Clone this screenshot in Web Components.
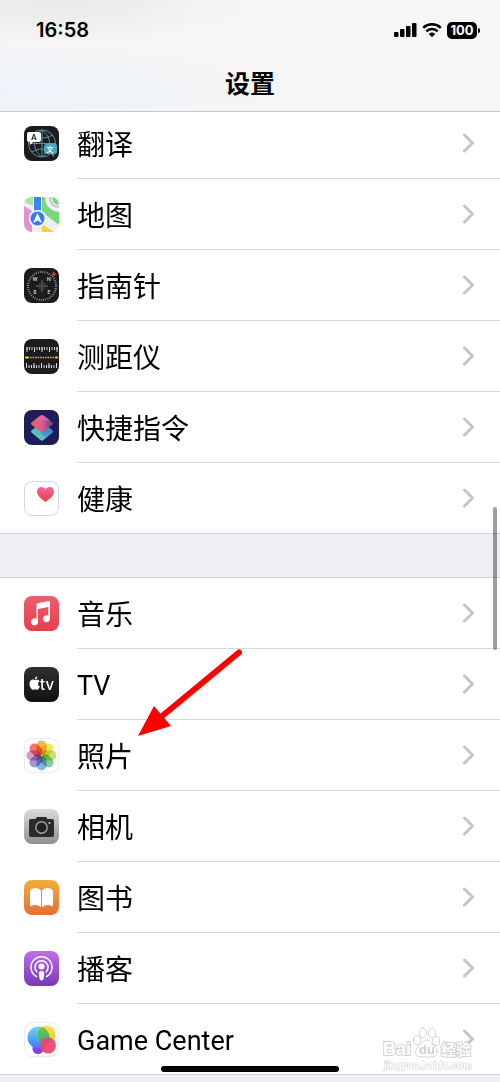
<!DOCTYPE html>
<html lang="zh-CN">
<head>
<meta charset="utf-8">
<meta name="viewport" content="width=device-width, initial-scale=1">
<title>设置</title>
<style>
    html {
        background: #f0eff5;
    }

    body {
        margin: 0;
        color: #000;
        font-family: Inter, "Noto Sans CJK SC", sans-serif;
    }
</style>
</head>
<body>

<settings-screen>
    <status-bar slot="header" time="16:58" battery="100"></status-bar>
    <nav-title slot="header">设置</nav-title>

    <settings-group class="scrolled">
        <settings-row icon="translate">翻译</settings-row>
        <settings-row icon="maps">地图</settings-row>
        <settings-row icon="compass">指南针</settings-row>
        <settings-row icon="measure">测距仪</settings-row>
        <settings-row icon="shortcuts">快捷指令</settings-row>
        <settings-row icon="health">健康</settings-row>
    </settings-group>

    <settings-group>
        <settings-row icon="music">音乐</settings-row>
        <settings-row icon="tv" lang="en">TV</settings-row>
        <settings-row icon="photos">照片</settings-row>
        <settings-row icon="camera">相机</settings-row>
        <settings-row icon="books">图书</settings-row>
        <settings-row icon="podcasts">播客</settings-row>
        <settings-row icon="games" lang="en">Game Center</settings-row>
    </settings-group>

    <pointer-arrow slot="overlay"></pointer-arrow>
    <site-watermark slot="overlay"></site-watermark>
</settings-screen>

<script>
const ICONS = {
    translate: `
        <rect width="35" height="35" rx="8" fill="#1c1c1e"/>
        <g fill="none" stroke="#5c93a3" stroke-width="1">
            <circle cx="18" cy="17.500" r="13.500"/>
            <path d="M4.500 17.500h27M18 4v27M18 4c-10 7-10 20 0 27M18 4c10 7 10 20 0 27M8 9c6 4 14 4 20 0M8 26c6-4 14-4 20 0"/>
        </g>
        <path d="M5 6h10a2 2 0 0 1 2 2v6a2 2 0 0 1-2 2H9l-3 3v-3H5a2 2 0 0 1-2-2V8a2 2 0 0 1 2-2z" fill="#fff"/>
        <path d="M22 18h9a2 2 0 0 1 2 2v6a2 2 0 0 1-2 2h-1v3l-3-3h-5a2 2 0 0 1-2-2v-6a2 2 0 0 1 2-2z" fill="#4ba3bc"/>
        <text x="10" y="14" font-size="8" font-weight="600" text-anchor="middle" fill="#222">A</text>
        <text x="26" y="26" font-size="7" font-weight="700" text-anchor="middle" fill="#fff">文</text>`,
    maps: `
        <clipPath id="m"><rect width="35" height="35" rx="8"/></clipPath>
        <g clip-path="url(#m)">
            <rect width="35" height="35" fill="#efeff2"/>
            <path d="M0 0h9v9L0 5z" fill="#a4e59b"/>
            <path d="M0 9l8 5v21H0z" fill="#df91d4"/>
            <path d="M18 0h17v28L18 15z" fill="#78d979"/>
            <path d="M18 27l12 8H18z" fill="#f8cd46"/>
            <path d="M25 -1a10 10 0 0 0 12 12" fill="none" stroke="#f1f1f3" stroke-width="7"/>
            <path d="M26 0a9 9 0 0 0 10 10" fill="none" stroke="#c9c9cd" stroke-width="2"/>
            <path d="M31-1l5 5V-1z" fill="#d7d7da"/>
            <path d="M10 0h7v20h-7z" fill="#3e83f0"/>
            <circle cx="13.500" cy="21.500" r="8.800" fill="#f4f5fa"/>
            <circle cx="13.500" cy="21.500" r="7" fill="#347af0"/>
            <path d="M13.500 16l4.500 10-4.500-2.500L9 26z" fill="#fff"/>
        </g>`,
    compass: `
        <rect width="35" height="35" rx="8" fill="#1c1c1e"/>
        <circle cx="18" cy="18" r="14" fill="none" stroke="#aaa" stroke-width="2" stroke-dasharray="0.800 1.400"/>
        <path d="M18 12v12M12 18h12" stroke="#555" stroke-width="1.500"/>
        <circle cx="18" cy="18" r="4" fill="#444" opacity=".6"/>
        <path d="M29 3.500l3 2.500-2 2-2-1z" fill="#f23b30"/>
        <g font-size="5" font-weight="700" text-anchor="middle" fill="#ccc">
            <text x="11" y="13">W</text><text x="25" y="13">N</text>
            <text x="11" y="26">S</text><text x="25" y="26">E</text>
        </g>`,
    measure: `
        <rect width="35" height="35" rx="8" fill="#1c1c1e"/>
        <g fill="none" stroke="#d8d8d8">
            <path d="M2.500 9.500h31" stroke-width="3" stroke-dasharray="1 1.500"/>
            <path d="M2.500 10.500h31" stroke-width="5" stroke-dasharray="1 6.500"/>
            <path d="M2 27.500h32" stroke-width="3" stroke-dasharray="1 1.500"/>
            <path d="M2 26.500h32" stroke-width="5" stroke-dasharray="1 6.500"/>
            <path d="M1 18.500h33" stroke="#e9b634" stroke-width="1.500" stroke-dasharray="1.500 1"/>
        </g>
        <path d="M2 17.500h2v2H2zM31.500 17.500h2v2h-2z" fill="#ffd23f"/>`,
    shortcuts: `
        <defs>
            <linearGradient id="s1" x1="0" y1="0" x2="1" y2="1"><stop stop-color="#377889"/><stop offset="1" stop-color="#4381f2"/></linearGradient>
            <linearGradient id="s2" x1="1" y1="0" x2="0" y2="1"><stop stop-color="#357ef1"/><stop offset="1" stop-color="#6ce3a4"/></linearGradient>
            <linearGradient id="s3" x1="0" y1="0" x2="1" y2="0"><stop stop-color="#f06452"/><stop offset=".5" stop-color="#dc5b91"/><stop offset="1" stop-color="#62417e"/></linearGradient>
        </defs>
        <rect width="35" height="35" rx="8" fill="#1d1d59"/>
        <path d="M16.500 13.500q1.500-1 3 0L28 20q2 1.500 0 3l-8.500 7q-1.500 1-3 0L8 23q-2-1.500 0-3z" fill="url(#s2)"/>
        <path d="M18 13.500l10 6.500q2 1.500 0 3l-6 4.500L12 17z" fill="url(#s1)" opacity=".55"/>
        <path d="M16.500 5.500q1.500-1 3 0L28 12q2 1.500 0 3l-8.500 6.500q-1.500 1-3 0L8 15q-2-1.500 0-3z" fill="url(#s3)"/>
        <path d="M10 10.500l6.500-5q1.500-1 3 0l6 4.500z" fill="#e76bb2" opacity=".6"/>`,
    health: `
        <linearGradient id="h" x1="0" y1="0" x2="0" y2="1"><stop stop-color="#ed67ad"/><stop offset="1" stop-color="#f03c2e"/></linearGradient>
        <rect x=".5" y=".5" width="34" height="34" rx="7.500" fill="#fff" stroke="#d6d6d8"/>
        <path d="M21.500 21C17 17.500 13 14.500 13 10.500 13 7.500 15 6 17.200 6c2 0 3.500 1 4.300 2.500C22.300 7 23.800 6 25.800 6 28 6 30 7.500 30 10.500c0 4-4 7-8.500 10.500z" fill="url(#h)"/>`,
    music: `
        <linearGradient id="a" x1="0" y1="0" x2="0" y2="1"><stop stop-color="#ea6070"/><stop offset="1" stop-color="#e73e49"/></linearGradient>
        <rect width="35" height="35" rx="8" fill="url(#a)"/>
        <path d="M12.500 8.500q0-1 1-1.200L25 5q1-.2 1 .8v17a3.500 3.500 0 1 1-1.700-3V11L14 13v12.500a3.500 3.500 0 1 1-1.500-2.500z" fill="#fff"/>`,
    tv: `
        <linearGradient id="t" x1="0" y1="0" x2="0" y2="1"><stop stop-color="#303030"/><stop offset="1" stop-color="#111"/></linearGradient>
        <rect width="35" height="35" rx="8" fill="url(#t)"/>
        <path d="M11 13.200c-1.200-.6-2.500-.9-3.700-.2-2.600 1.500-2.200 6.400.2 8.900 1.300 1.300 2.200.7 3.500.4 1.300.3 2.200.9 3.500-.4.700-.7 1.100-1.500 1.400-2.400-2.300-1-2.400-4.100-.2-5.300-1.300-1.700-3.100-1.500-4.700-1z" fill="#fff"/>
        <path d="M10.800 12.500c0-1.500 1-2.600 2.500-2.900.1 1.600-.9 2.800-2.500 2.900z" fill="#fff"/>
        <text x="16" y="23" font-size="15" font-weight="500" fill="#fff">tv</text>`,
    photos: `
        <rect x=".5" y=".5" width="34" height="34" rx="7.500" fill="#fff" stroke="#ececee"/>
        <g class="petals">${['#f7a83a', '#f2e244', '#bfdb5c', '#74c391', '#75a9e2', '#9683cc', '#cf8bc0', '#f0604e'].map((color, i) =>
            `<rect x="12.500" y="2.500" width="10" height="14.500" rx="5" fill="${color}" opacity=".85" transform="rotate(${i * 45} 17.500 17.500)"/>`).join('')}
        </g>`,
    camera: `
        <linearGradient id="c" x1="0" y1="0" x2="0" y2="1"><stop stop-color="#dcdbe0"/><stop offset="1" stop-color="#8f8e93"/></linearGradient>
        <rect width="35" height="35" rx="8" fill="url(#c)"/>
        <path d="M7 10h4.500l1.500-2h9l1.500 2H28q2 0 2 2v14q0 2-2 2H7q-2 0-2-2V12q0-2 2-2z" fill="#2b2b2c"/>
        <circle cx="17.500" cy="18.500" r="5.700" fill="#222" stroke="#a5a5aa" stroke-width="1.400"/>
        <circle cx="25.500" cy="14" r="1.100" fill="#f5c928"/>`,
    books: `
        <linearGradient id="b" x1="0" y1="0" x2="0" y2="1"><stop stop-color="#f2ad3d"/><stop offset="1" stop-color="#e96d34"/></linearGradient>
        <rect width="35" height="35" rx="8" fill="url(#b)"/>
        <path d="M17 11q-1.500-3-5.500-3T6 11v15.500q1.500-1.500 5-1.500t6 2zM18 11q1.500-3 5.500-3t5.500 3v15.500Q27.500 25 24 25t-6 2z" fill="#fff"/>`,
    podcasts: `
        <linearGradient id="p" x1="0" y1="0" x2="0" y2="1"><stop stop-color="#c26deb"/><stop offset="1" stop-color="#7539b7"/></linearGradient>
        <rect width="35" height="35" rx="8" fill="url(#p)"/>
        <g fill="none" stroke="#fff" stroke-width="1.500" stroke-linecap="round">
            <path d="M12.500 25.500a10.500 10.500 0 1 1 10 0"/>
            <path d="M12.800 20.800a6.500 6.500 0 1 1 9.400 0"/>
        </g>
        <circle cx="17.500" cy="15.500" r="3" fill="#fff"/>
        <path d="M17.500 20q3 0 2.700 2.500l-.7 5q-.3 2-2 2t-2-2l-.7-5q-.3-2.500 2.700-2.500z" fill="#fff"/>`,
    games: `
        <defs>
            <linearGradient id="g1" x1="0" y1="0" x2="0" y2="1"><stop stop-color="#6ed9f8"/><stop offset="1" stop-color="#3d79ef"/></linearGradient>
            <linearGradient id="g2" x1="0" y1="0" x2="0" y2="1"><stop stop-color="#fae63c"/><stop offset="1" stop-color="#f6bd38"/></linearGradient>
            <linearGradient id="g4" x1="0" y1="0" x2="0" y2="1"><stop stop-color="#79cb47"/><stop offset="1" stop-color="#36a77a"/></linearGradient>
            <clipPath id="gb"><circle cx="14.500" cy="15.500" r="11"/></clipPath>
        </defs>
        <rect x=".5" y=".5" width="34" height="34" rx="7.500" fill="#fff" stroke="#ececee"/>
        <circle cx="14" cy="26.500" r="5.500" fill="#8a39f4"/>
        <circle cx="14.500" cy="15.500" r="11" fill="url(#g1)"/>
        <circle cx="22.500" cy="12.500" r="9" fill="url(#g2)"/>
        <circle cx="22.500" cy="12.500" r="9" fill="url(#g4)" clip-path="url(#gb)"/>
        <circle cx="24" cy="23.500" r="8" fill="#ee426d" opacity=".92"/>`
};

class BaseElement extends HTMLElement {
    constructor() {
        super();
        const template = document.createElement('template');
        template.innerHTML = `<style>${this.constructor.styles}</style>${this.constructor.markup}`;
        this.attachShadow({ mode: 'open' });
        this.shadowRoot.appendChild(template.content.cloneNode(true));
    }
}

class SettingsScreen extends BaseElement {
    static get styles() {
        return `
            :host {
                display: block;
                position: relative;
                overflow: hidden;
                min-height: 100vh;
            }

            header {
                position: relative;
                z-index: 1;
                box-sizing: border-box;
                height: 112px;
                border-bottom: 1px solid #c8c8ca;
                background:
                    radial-gradient(ellipse at 12% 0, #e9e9e9, transparent 30%),
                    radial-gradient(ellipse at 0 85%, #edf3fa, transparent 40%),
                    #f6f6f6;
            }

            main {
                display: grid;
                gap: 43px;
            }

            .thumb {
                position: absolute;
                top: 507px;
                right: 3px;
                width: 4px;
                height: 143px;
                border-radius: 2px;
                background: rgba(0, 0, 0, .38);
            }

            .home {
                position: fixed;
                bottom: 10px;
                left: 50%;
                width: 178px;
                height: 6px;
                border-radius: 3px;
                background: #000;
                transform: translateX(-50%);
            }
        `;
    }

    static get markup() {
        return `
            <header><slot name="header"></slot></header>
            <main><slot></slot></main>
            <div class="thumb"></div>
            <slot name="overlay"></slot>
            <div class="home"></div>
        `;
    }
}

class StatusBar extends BaseElement {
    static get styles() {
        return `
            :host {
                display: flex;
                align-items: center;
                justify-content: space-between;
                height: 60px;
                padding: 0 20px 0 36px;
            }

            #time {
                font-size: 20px;
                font-weight: 600;
            }

            .indicators {
                display: flex;
                align-items: center;
                gap: 5px;
            }

            svg {
                display: block;
            }

            .battery {
                display: flex;
                align-items: center;
                gap: 1px;
            }

            #level {
                width: 30px;
                border-radius: 5px;
                background: #000;
                color: #fff;
                font-size: 13px;
                font-weight: 700;
                line-height: 17px;
                text-align: center;
            }

            .nub {
                width: 2px;
                height: 5px;
                border-radius: 0 2px 2px 0;
                background: #000;
            }
        `;
    }

    static get markup() {
        return `
            <span id="time"></span>
            <div class="indicators">
                <svg width="23" height="14" viewBox="0 0 23 14">
                    <rect y="9" width="4.500" height="5" rx="1"/>
                    <rect x="6" y="6" width="4.500" height="8" rx="1"/>
                    <rect x="12" y="3" width="4.500" height="11" rx="1"/>
                    <rect x="18" width="4.500" height="14" rx="1"/>
                </svg>
                <svg width="20" height="14" viewBox="0 0 20 14">
                    <path d="M1.200 4.800a13 13 0 0 1 17.600 0M4.300 8.300a8.300 8.300 0 0 1 11.400 0" fill="none" stroke="#000" stroke-width="2.500"/>
                    <path d="M6.800 11a4.700 4.700 0 0 1 6.400 0L10 14z"/>
                </svg>
                <div class="battery">
                    <span id="level"></span>
                    <span class="nub"></span>
                </div>
            </div>
        `;
    }

    connectedCallback() {
        this.shadowRoot.querySelector('#time').textContent = this.getAttribute('time');
        this.shadowRoot.querySelector('#level').textContent = this.getAttribute('battery');
    }
}

class NavTitle extends BaseElement {
    static get styles() {
        return `
            :host {
                display: block;
            }

            h1 {
                margin: 0;
                font-size: 25px;
                font-weight: 700;
                line-height: 48px;
                text-align: center;
            }
        `;
    }

    static get markup() {
        return `<h1><slot></slot></h1>`;
    }
}

class SettingsGroup extends BaseElement {
    static get styles() {
        return `
            :host {
                display: block;
                border-top: 1px solid #d2d2d5;
                background: #fff;
            }

            /* the first group is partly scrolled under the header */
            :host(.scrolled) {
                margin-top: -5px;
            }
        `;
    }

    static get markup() {
        return `<slot></slot>`;
    }
}

class SettingsRow extends BaseElement {
    static get styles() {
        return `
            :host {
                display: block;
            }

            a {
                display: grid;
                grid-template-columns: 35px 1fr auto;
                grid-template-rows: 70px 1px;
                align-items: center;
                column-gap: 18px;
                padding: 0 25px 0 24px;
                color: inherit;
                text-decoration: none;
            }

            a::after {
                content: "";
                grid-column: 1 / -1;
                height: 1px;
                margin: 0 -25px 0 53px;
                background: #d9d9dc;
            }

            :host(:last-child) a::after {
                margin-left: -24px;
                background: #d2d2d5;
            }

            svg {
                display: block;
            }

            .petals rect {
                mix-blend-mode: multiply;
            }

            .label {
                padding-top: 4px;
                font-size: 28px;
                line-height: 40px;
            }

            :host(:lang(en)) .label {
                font-family: Roboto, sans-serif;
                font-size: 27px;
            }
        `;
    }

    static get markup() {
        return `
            <a href="#">
                <svg id="icon" width="35" height="35" viewBox="0 0 35 35" aria-hidden="true"></svg>
                <span class="label"><slot></slot></span>
                <svg width="13" height="20" viewBox="0 0 13 20" fill="none" stroke="#c5c5c7" stroke-width="3" stroke-linecap="round" stroke-linejoin="round" aria-hidden="true">
                    <path d="M2.500 2l8 8-8 8"/>
                </svg>
            </a>
        `;
    }

    connectedCallback() {
        this.shadowRoot.querySelector('#icon').innerHTML = ICONS[this.getAttribute('icon')];
    }
}

class PointerArrow extends BaseElement {
    static get styles() {
        return `
            :host {
                position: absolute;
                top: 648px;
                left: 137px;
                pointer-events: none;
            }

            svg {
                display: block;
            }
        `;
    }

    static get markup() {
        return `
            <svg width="108" height="90" viewBox="0 0 108 90">
                <path d="M102 4.500L24 69" stroke="#fe0000" stroke-width="6" stroke-linecap="round"/>
                <path d="M1 88l16-30 17 20z" fill="#fe0000"/>
            </svg>
        `;
    }
}

class SiteWatermark extends BaseElement {
    static get styles() {
        return `
            :host {
                position: absolute;
                top: 1026px;
                right: 25px;
                pointer-events: none;
            }

            svg {
                display: block;
                overflow: visible;
                font-family: "Liberation Sans", "Noto Sans CJK SC", sans-serif;
                font-weight: 700;
            }

            text {
                paint-order: stroke;
            }
        `;
    }

    static get markup() {
        return `
            <svg width="92" height="46" viewBox="0 0 92 46" fill="#fff" stroke="#d3d3d3">
                <ellipse cx="34" cy="14" rx="3.500" ry="4.500"/>
                <ellipse cx="40" cy="7" rx="3.500" ry="5"/>
                <ellipse cx="49" cy="7" rx="3.500" ry="5"/>
                <ellipse cx="53" cy="15" rx="3.500" ry="4.500"/>
                <path d="M44 14c4 0 5 4 8 7 4 4 2 10-3 10H38c-6 0-7-6-3-10 3-3 5-7 9-7z"/>
                <text x="0" y="29" font-size="18" stroke-width="2">Bai</text>
                <text x="36" y="28" font-size="13" stroke="none" fill="#cfcfcf">du</text>
                <text x="58" y="29" font-size="15" stroke-width="2">经验</text>
                <text x="1" y="43" font-size="10" stroke-width="1">jingyan.baidu.com</text>
            </svg>
        `;
    }
}

customElements.define('settings-screen', SettingsScreen);
customElements.define('status-bar', StatusBar);
customElements.define('nav-title', NavTitle);
customElements.define('settings-group', SettingsGroup);
customElements.define('settings-row', SettingsRow);
customElements.define('pointer-arrow', PointerArrow);
customElements.define('site-watermark', SiteWatermark);
</script>
</body>
</html>
